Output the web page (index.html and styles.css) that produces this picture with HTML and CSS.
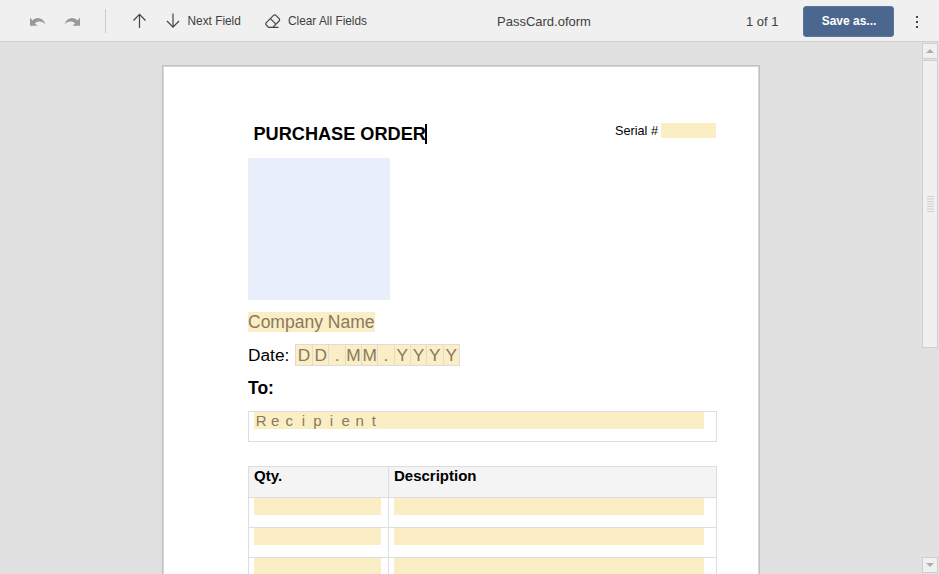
FILE: index.html
```html
<!DOCTYPE html>
<html lang="en">
<head>
<meta charset="utf-8">
<title>PassCard.oform</title>
<link rel="stylesheet" href="styles.css">
</head>
<body>
<header class="toolbar">
  <svg class="undo" width="16" height="10" viewBox="0 0 16 10"><path d="M0 .5v8.300h7.500L4.900 6.400C8 3.400 12.500 4 15.600 7.400 13 .6 7 -.8 2.600 3.400z"/></svg>
  <svg class="redo" width="16" height="10" viewBox="0 0 16 10"><path d="M16 .5v8.300H8.500L11.100 6.400C8 3.400 3.500 4 .4 7.400 3 .6 9 -.8 13.400 3.400z"/></svg>
  <span class="divider"></span>
  <svg class="arrow prev" width="14" height="16" viewBox="0 0 14 16"><path d="M7.500 15V1.500M1.500 7.500l6-6.200 6 6.200"/></svg>
  <svg class="arrow next" width="14" height="16" viewBox="0 0 14 16"><path d="M7 0.500v13.500M1 8L7 14.200 13 8"/></svg>
  <span class="label next-label">Next Field</span>
  <svg class="arrow eraser" width="16" height="15" viewBox="0 0 16 15"><path d="M3.500 13.300L1.300 11q-1-1.200 0-2.400L8.500 1.400q1.200-1 2.400 0l3.200 3.200q1 1.200 0 2.400L7.800 13.300M3 13.400h10.500M5.400 4.700l5.500 5.500"/></svg>
  <span class="label clear-label">Clear All Fields</span>
  <span class="filename">PassCard.oform</span>
  <span class="pages">1 of 1</span>
  <button class="save">Save as...</button>
  <span class="more"><i></i><i></i><i></i></span>
</header>
<div class="workspace">
  <main class="page">
    <div class="heading">
      <h1>PURCHASE ORDER<span class="caret"></span></h1>
      <div class="serial"><span class="serial-label">Serial #</span><span class="field"></span></div>
    </div>
    <div class="picture"></div>
    <div class="company">Company Name</div>
    <div class="date">Date:
      <div class="comb"><span>D</span><span>D</span><span>.</span><span>M</span><span>M</span><span>.</span><span>Y</span><span>Y</span><span>Y</span><span>Y</span></div>
    </div>
    <div class="to">To:</div>
    <div class="recipient"><div class="field letters"><span>R</span><span>e</span><span>c</span><span>i</span><span>p</span><span>i</span><span>e</span><span>n</span><span>t</span></div></div>
    <div class="items">
      <div class="row head"><div>Qty.</div><div>Description</div></div>
      <div class="row"><div><div class="field"></div></div><div><div class="field"></div></div></div>
      <div class="row"><div><div class="field"></div></div><div><div class="field"></div></div></div>
      <div class="row last"><div><div class="field"></div></div><div><div class="field"></div></div></div>
    </div>
  </main>
  <aside class="scrollbar">
    <div class="step"><svg width="8" height="4"><path d="M0 4L4 0l4 4z"/></svg></div>
    <div class="thumb"><div class="grip"></div></div>
    <div class="step down"><svg width="8" height="4"><path d="M0 0l4 4 4-4z"/></svg></div>
  </aside>
</div>
</body>
</html>
```
FILE: styles.css
```css
* { box-sizing: border-box; }
body {
  margin: 0;
  height: 574px;
  overflow: hidden;
  background: #e1e1e1;
  font-family: "Liberation Sans", Arial, sans-serif;
  color: #000;
}
.toolbar {
  display: flex;
  align-items: center;
  height: 42px;
  padding-left: 30px;
  background: #f0f0f0;
  border-bottom: 1px solid #d0d0d2;
  color: #404040;
  white-space: nowrap;
}
.toolbar > * { flex: none; }
.undo, .redo { fill: #999; margin-top: 3px; }
.redo { margin-left: 18px; }
.divider { width: 1px; height: 24px; margin-left: 25px; background: #cbcbcb; }
.arrow { fill: none; stroke: #444; stroke-width: 1.2; }
.prev { margin-left: 26px; margin-top: 1px; }
.next { margin-left: 20px; margin-top: 1px; }
.label { font-size: 11.85px; line-height: 14px; }
.next-label { width: 55px; margin-left: 7px; padding-left: 0.5px; }
.eraser { width: 16px; margin-left: 23px; margin-top: 2px; }
.clear-label { width: 80px; margin-left: 7px; }
.filename { width: 95px; margin-left: 129px; padding-top: 1px; font-size: 13px; }
.pages { width: 34px; margin-left: 154px; padding-top: 1px; font-size: 13px; }
.save {
  width: 91px;
  height: 31px;
  margin: 1px 0 0 23px;
  padding: 0 0 0 1px;
  border: 1px solid #5d7599;
  border-radius: 3px;
  background: #4c678f;
  color: #fff;
  font: bold 12px "Liberation Sans", Arial, sans-serif;
}
.more { display: flex; flex-direction: column; gap: 3px; margin: 2px 0 0 22px; }
.more i { width: 2px; height: 2px; background: #444; }
.workspace { display: flex; height: 532px; justify-content: space-between; }
.page {
  width: 598px;
  height: 509px;
  margin: 23px 0 0 162px;
  padding: 56px 0 0 85px;
  border: 1px solid #bfbfc4;
  border-bottom: 0;
  box-shadow: inset 1px 1px 0 #d6d6dc, inset -1px 0 0 #d6d6dc;
  background: #fff;
}
.heading { display: flex; justify-content: space-between; width: 468px; height: 36px; padding-left: 5.5px; }
h1 { display: flex; height: 24px; margin: 0; font-size: 18.15px; line-height: 24px; }
.caret { width: 2px; height: 20px; margin: 2px 0 0 -1px; background: #000; }
.serial { display: flex; align-items: center; height: 16px; font-size: 12.7px; }
.serial-label { padding-top: 2px; }
.field { background: #fceec4; }
.serial .field { width: 55px; height: 15px; margin-left: 3px; }
.picture { width: 142px; height: 142px; border-radius: 1px; background: #e8effb; }
.company {
  width: 127px;
  height: 20px;
  margin-top: 12px;
  background: #fceec4;
  color: #867a5f;
  font-size: 17.5px;
  line-height: 21px;
  white-space: nowrap;
}
.date { display: flex; margin-top: 12px; height: 22px; font-size: 17.3px; line-height: 22px; }
.comb {
  display: grid;
  grid-template-columns: repeat(10, 1fr);
  width: 165px;
  height: 22px;
  margin-left: 5.5px;
  border: 1px solid #dedcd7;
  background: #fceec4;
  color: #867a5f;
  line-height: 20px;
  text-align: center;
}
.comb span + span { border-left: 1px solid #dedcd7; }
.to { height: 24px; margin-top: 11px; font-size: 17.5px; font-weight: bold; line-height: 22px; }
.recipient { width: 469px; height: 31px; margin-top: 10px; padding-left: 5px; border: 1px solid #dedede; }
.letters { display: flex; width: 450px; height: 17px; color: #867a5f; font-size: 15px; line-height: 17px; }
.letters span { width: 14.1px; text-align: center; }
.items { width: 469px; margin-top: 24px; border: 1px solid #dedede; border-bottom: 0; }
.row { display: grid; grid-template-columns: 140px 327px; height: 30px; border-bottom: 1px solid #dedede; }
.row > div { padding-left: 5px; }
.row > div:first-child { border-right: 1px solid #dedede; }
.row .field { width: 127px; height: 17px; }
.row > div + div .field { width: 310px; }
.head { height: 31px; background: #f4f4f4; font-size: 15px; font-weight: bold; line-height: 17px; }
.last { height: 16px; border-bottom: 0; }
.last .field { height: 16px; }
.scrollbar { display: flex; flex-direction: column; width: 17px; padding: 1px 0 1px; }
.step {
  display: grid;
  place-items: center;
  width: 16px;
  height: 16px;
  border: 1px solid #cfcfcf;
  background: #f0f0f0;
}
.step svg { fill: #adadad; }
.thumb {
  display: grid;
  place-items: center;
  width: 16px;
  height: 288px;
  margin-top: 1px;
  border: 1px solid #cfcfcf;
  background: #f0f0f0;
}
.grip {
  width: 7px;
  height: 16px;
  background: repeating-linear-gradient(#cfcfcf 0 1px, #f0f0f0 1px 2px, #dfdfdf 2px 4px, #f0f0f0 4px 5px);
}
.down { margin-top: auto; }
```
